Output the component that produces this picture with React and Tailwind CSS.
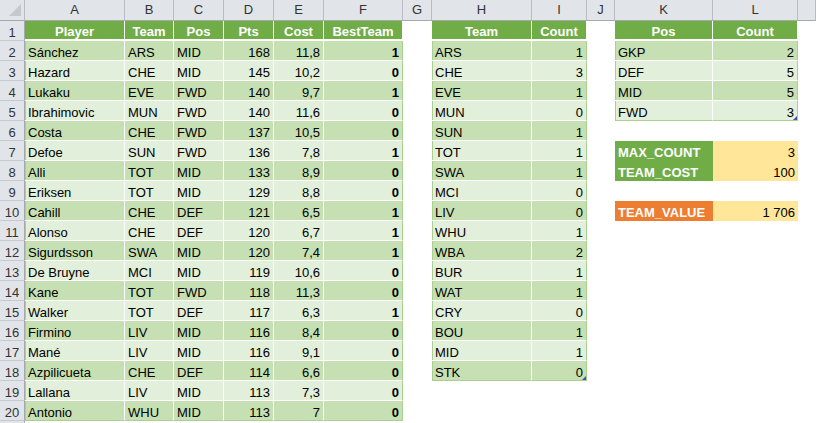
import React from 'react';
import clsx from 'clsx';

const players = [
  ['Sánchez', 'ARS', 'MID', 168, '11,8', 1],
  ['Hazard', 'CHE', 'MID', 145, '10,2', 0],
  ['Lukaku', 'EVE', 'FWD', 140, '9,7', 1],
  ['Ibrahimovic', 'MUN', 'FWD', 140, '11,6', 0],
  ['Costa', 'CHE', 'FWD', 137, '10,5', 0],
  ['Defoe', 'SUN', 'FWD', 136, '7,8', 1],
  ['Alli', 'TOT', 'MID', 133, '8,9', 0],
  ['Eriksen', 'TOT', 'MID', 129, '8,8', 0],
  ['Cahill', 'CHE', 'DEF', 121, '6,5', 1],
  ['Alonso', 'CHE', 'DEF', 120, '6,7', 1],
  ['Sigurdsson', 'SWA', 'MID', 120, '7,4', 1],
  ['De Bruyne', 'MCI', 'MID', 119, '10,6', 0],
  ['Kane', 'TOT', 'FWD', 118, '11,3', 0],
  ['Walker', 'TOT', 'DEF', 117, '6,3', 1],
  ['Firmino', 'LIV', 'MID', 116, '8,4', 0],
  ['Mané', 'LIV', 'MID', 116, '9,1', 0],
  ['Azpilicueta', 'CHE', 'DEF', 114, '6,6', 0],
  ['Lallana', 'LIV', 'MID', 113, '7,3', 0],
  ['Antonio', 'WHU', 'MID', 113, '7', 0],
];

const teamCounts = [
  ['ARS', 1], ['CHE', 3], ['EVE', 1], ['MUN', 0], ['SUN', 1], ['TOT', 1],
  ['SWA', 1], ['MCI', 0], ['LIV', 0], ['WHU', 1], ['WBA', 2], ['BUR', 1],
  ['WAT', 1], ['CRY', 0], ['BOU', 1], ['MID', 1], ['STK', 0],
];

const posCounts = [['GKP', 2], ['DEF', 5], ['MID', 5], ['FWD', 3]];

const letters = ['A', 'B', 'C', 'D', 'E', 'F', 'G', 'H', 'I', 'J', 'K', 'L', ''];

function Blank() {
  return <div className="bg-white" />;
}

function Th({ children, last }) {
  return (
    <div
      className={clsx(
        'flex items-end justify-center overflow-hidden whitespace-nowrap bg-[#70ad47] font-bold text-white leading-[15px] border-r border-b-2 border-b-white',
        last ? 'border-r-[#70ad47]' : 'border-r-white'
      )}
    >
      {children}
    </div>
  );
}

function Td({ children, dark, num, bold, first, last, bottom, handle }) {
  return (
    <div
      className={clsx(
        'relative flex items-end overflow-hidden whitespace-nowrap px-[3px] leading-[15px] border-r border-b',
        dark ? 'bg-[#c6e0b4]' : 'bg-[#e2efda]',
        num ? 'justify-end' : 'justify-start',
        bold && 'font-bold',
        last ? 'border-r-[#a9d08e]' : 'border-r-white',
        bottom ? 'border-b-[#a9d08e]' : 'border-b-white',
        first && 'shadow-[inset_1px_0_0_#a9d08e]'
      )}
    >
      {children}
      {handle && (
        <span className="absolute bottom-0 right-0 h-0 w-0 border-b-[4px] border-l-[4px] border-b-[#3f51b5] border-l-transparent" />
      )}
    </div>
  );
}

function rowCells(r) {
  const cells = [];
  if (r === 1) {
    ['Player', 'Team', 'Pos', 'Pts', 'Cost', 'BestTeam'].forEach((h, i) =>
      cells.push(<Th key={'a' + i}>{h}</Th>)
    );
    cells.push(<Blank key="g" />);
    cells.push(<Th key="h">Team</Th>);
    cells.push(<Th key="i">Count</Th>);
    cells.push(<Blank key="j" />);
    cells.push(<Th key="k">Pos</Th>);
    cells.push(<Th key="l">Count</Th>);
    cells.push(<Blank key="m" />);
    return cells;
  }
  const i = r - 2;
  const dark = i % 2 === 0;
  const p = players[i];
  if (p) {
    const lastRow = i === players.length - 1;
    cells.push(<Td key="a" dark={dark} first bottom={lastRow}>{p[0]}</Td>);
    cells.push(<Td key="b" dark={dark} bottom={lastRow}>{p[1]}</Td>);
    cells.push(<Td key="c" dark={dark} bottom={lastRow}>{p[2]}</Td>);
    cells.push(<Td key="d" dark={dark} num bottom={lastRow}>{p[3]}</Td>);
    cells.push(<Td key="e" dark={dark} num bottom={lastRow}>{p[4]}</Td>);
    cells.push(<Td key="f" dark={dark} num bold last bottom={lastRow}>{p[5]}</Td>);
  } else {
    for (let k = 0; k < 6; k++) cells.push(<Blank key={'a' + k} />);
  }
  cells.push(<Blank key="g" />);
  const t = teamCounts[i];
  if (t) {
    const lastRow = i === teamCounts.length - 1;
    cells.push(<Td key="h" dark={dark} first bottom={lastRow}>{t[0]}</Td>);
    cells.push(<Td key="i" dark={dark} num last bottom={lastRow} handle={lastRow}>{t[1]}</Td>);
  } else {
    cells.push(<Blank key="h" />);
    cells.push(<Blank key="i" />);
  }
  cells.push(<Blank key="j" />);
  const q = posCounts[i];
  if (q) {
    const lastRow = i === posCounts.length - 1;
    cells.push(<Td key="k" dark={dark} first bottom={lastRow}>{q[0]}</Td>);
    cells.push(<Td key="l" dark={dark} num last bottom={lastRow} handle={lastRow}>{q[1]}</Td>);
  } else if (r === 7 || r === 8 || r === 10) {
    const label = r === 7 ? 'MAX_COUNT' : r === 8 ? 'TEAM_COST' : 'TEAM_VALUE';
    const value = r === 7 ? '3' : r === 8 ? '100' : '1 706';
    cells.push(
      <div
        key="k"
        className={clsx(
          'flex items-end overflow-hidden whitespace-nowrap px-[3px] pb-[1px] font-bold leading-[15px] text-white',
          r === 10 ? 'bg-[#ed7d31]' : 'bg-[#70ad47]'
        )}
      >
        {label}
      </div>
    );
    cells.push(
      <div key="l" className="flex items-end justify-end overflow-hidden whitespace-nowrap bg-[#ffe699] px-[3px] pb-[1px] leading-[15px]">
        {value}
      </div>
    );
  } else {
    cells.push(<Blank key="k" />);
    cells.push(<Blank key="l" />);
  }
  cells.push(<Blank key="m" />);
  return cells;
}

export default function App() {
  const rows = Array.from({ length: 21 }, (_, k) => k + 1);
  return (
    <div className="h-[423px] w-[816px] overflow-hidden bg-white font-['Liberation_Sans',Arial,sans-serif] text-[13px] text-black">
      <div className="grid grid-cols-[25px_100px_49px_50px_50px_50px_79px_29px_100px_55px_28px_98px_85px_1fr] grid-rows-[21px_repeat(21,20px)]">
        <div className="relative border-b border-r border-b-[#a5a9ae] border-r-[#b8bcc1] bg-[#e1e4e8]">
          <svg width="24" height="20" className="absolute left-0 top-0">
            <polygon points="21,4 21,16 9,16" fill="#c5c8cc" />
          </svg>
        </div>
        {letters.map((l, k) => (
          <div
            key={'col' + k}
            className="flex items-center justify-center border-b border-r border-b-[#a5a9ae] border-r-[#b8bcc1] bg-[#e1e4e8] text-[#333]"
          >
            {l}
          </div>
        ))}
        {rows.map((r) => (
          <React.Fragment key={r}>
            <div className="flex items-end justify-center border-b border-r border-b-[#c6c9cd] border-r-[#a5a9ae] bg-[#e1e4e8] leading-[15px] text-[#333]">
              {r <= 20 ? r : ''}
            </div>
            {r <= 20 ? rowCells(r) : letters.map((_, k) => <Blank key={'z' + k} />)}
          </React.Fragment>
        ))}
      </div>
    </div>
  );
}
